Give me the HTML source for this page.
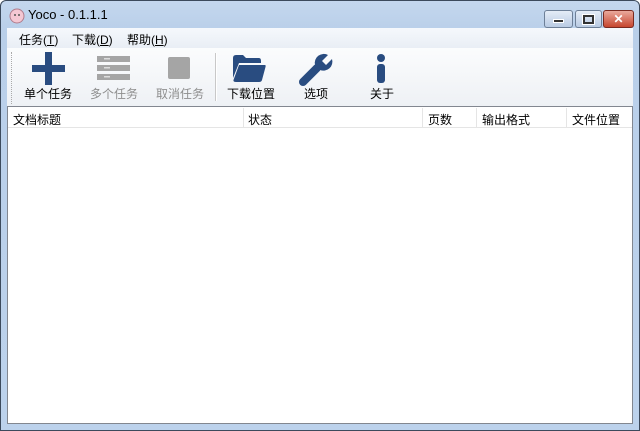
<!DOCTYPE html>
<html><head><meta charset="utf-8"><style>
body{margin:0;width:640px;height:431px;overflow:hidden;font-family:"Liberation Sans","Noto Sans CJK SC",sans-serif;font-size:12px;}
.win{position:absolute;left:0;top:0;width:638px;height:429px;border:1px solid #3c4a5c;border-radius:6px 6px 0 0;background:linear-gradient(#c4d7ee,#b9cfe9 30px,#bcd2ec);}
.client{position:absolute;left:7px;top:28px;width:626px;height:396px;background:#f0f0f0;}
.t{position:absolute;}
.lbl{position:absolute;top:86px;font-size:12px;color:#000;}
.g{color:#8e8e8e}
</style></head><body>
<div class="win">
 <svg class="t" style="left:8px;top:7px" width="16" height="16"><circle cx="8" cy="8" r="7" fill="#f4c7d3" stroke="#b07c8c"/><circle cx="6" cy="7" r="1" fill="#555"/><circle cx="10" cy="7" r="1" fill="#555"/></svg>
 <div class="t" style="left:27px;top:6px;font-size:13px;color:#000">Yoco - 0.1.1.1</div>
 <div class="t" style="left:543px;top:9px;width:27px;height:16px;border:1px solid #6d7f97;border-radius:3px;background:linear-gradient(#e4ecf7,#b9cbe3)"><div style="margin:8px auto 0;width:9px;height:2px;background:#333;border:1px solid #fff"></div></div>
 <div class="t" style="left:574px;top:9px;width:25px;height:16px;border:1px solid #6d7f97;border-radius:3px;background:linear-gradient(#e4ecf7,#b9cbe3)"><div style="margin:4px auto 0;width:7px;height:5px;border:2px solid #333;outline:1px solid #fff"></div></div>
 <div class="t" style="left:602px;top:9px;width:29px;height:16px;border:1px solid #7a2a20;border-radius:3px;background:linear-gradient(#e9a99c,#c7462f);color:#fff;font-weight:bold;text-align:center;line-height:16px;font-size:12px">✕</div>
</div>
<div class="client">
 <div class="t" style="left:0;top:0;width:626px;height:20px;background:linear-gradient(#f5f8fc,#e9eef5)"></div>
 <div class="t" style="left:12px;top:3px">任务(<u>T</u>)</div>
 <div class="t" style="left:65px;top:3px">下载(<u>D</u>)</div>
 <div class="t" style="left:120px;top:3px">帮助(<u>H</u>)</div>
 <div class="t" style="left:0;top:20px;width:626px;height:58px;background:linear-gradient(#fbfcfd,#eef1f5)"></div>
 <div class="t" style="left:4px;top:24px;height:52px;border-left:1px dotted #aaa"></div>
 <svg class="t" style="left:25px;top:24px" width="34" height="34"><rect x="13" y="0" width="7" height="33" fill="#294c80"/><rect x="0" y="13" width="33" height="7" fill="#294c80"/></svg>
 <div class="lbl" style="left:17px;top:57px">单个任务</div>
 <svg class="t" style="left:90px;top:28px" width="34" height="26"><g fill="#a5a5a5"><rect y="0" width="33" height="6"/><rect y="9" width="33" height="6"/><rect y="18" width="33" height="6"/></g><g fill="#ddd"><rect x="7" y="2" width="6" height="1.5"/><rect x="7" y="11" width="6" height="1.5"/><rect x="7" y="20" width="6" height="1.5"/></g></svg>
 <div class="lbl g" style="left:83px;top:57px">多个任务</div>
 <div class="t" style="left:161px;top:29px;width:22px;height:22px;background:#a5a5a5;border-radius:2px"></div>
 <div class="lbl g" style="left:149px;top:57px">取消任务</div>
 <div class="t" style="left:208px;top:25px;height:48px;border-left:1px solid #c8c8c8;border-right:1px solid #fff"></div>
 <svg class="t" style="left:225px;top:26px" width="35" height="30"><path d="M1 4 Q1 1 4 1 H11 L14 4 H27 Q29 4 29 7 V9 H7 L1 24 Z" fill="#294c80"/><path d="M7 11 H33 Q34 11 33.5 13 L30 26 Q29.5 28 27 28 H4 Q1 28 1.5 26 Z" fill="#294c80"/></svg>
 <div class="lbl" style="left:220px;top:57px">下载位置</div>
 <svg class="t" style="left:292px;top:24px" width="36" height="34"><path d="M4 30 L18 16" stroke="#294c80" stroke-width="8" stroke-linecap="round"/><path d="M16 13 A9 9 0 0 1 29 3 L23 9 L27 13 L33 7 A9 9 0 0 1 21 18 Z" fill="#294c80"/></svg>
 <div class="lbl" style="left:297px;top:57px">选项</div>
 <svg class="t" style="left:368px;top:26px" width="14" height="30"><circle cx="6" cy="4" r="4" fill="#294c80"/><rect x="2" y="10" width="8" height="19" rx="3" fill="#294c80"/></svg>
 <div class="lbl" style="left:363px;top:57px">关于</div>
 <div class="t" style="left:0;top:78px;width:624px;height:316px;background:#fff;border:1px solid #828790"></div>
 <div class="t" style="left:1px;top:79px;width:624px;height:20px;background:#fff;border-bottom:1px solid #e5e5e5"></div>
 <div class="t" style="left:236px;top:80px;height:19px;border-left:1px solid #e5e5e5"></div>
 <div class="t" style="left:415px;top:80px;height:19px;border-left:1px solid #e5e5e5"></div>
 <div class="t" style="left:469px;top:80px;height:19px;border-left:1px solid #e5e5e5"></div>
 <div class="t" style="left:559px;top:80px;height:19px;border-left:1px solid #e5e5e5"></div>
 <div class="t" style="left:6px;top:83px">文档标题</div>
 <div class="t" style="left:241px;top:83px">状态</div>
 <div class="t" style="left:421px;top:83px">页数</div>
 <div class="t" style="left:475px;top:83px">输出格式</div>
 <div class="t" style="left:565px;top:83px">文件位置</div>
</div>
</body></html>
